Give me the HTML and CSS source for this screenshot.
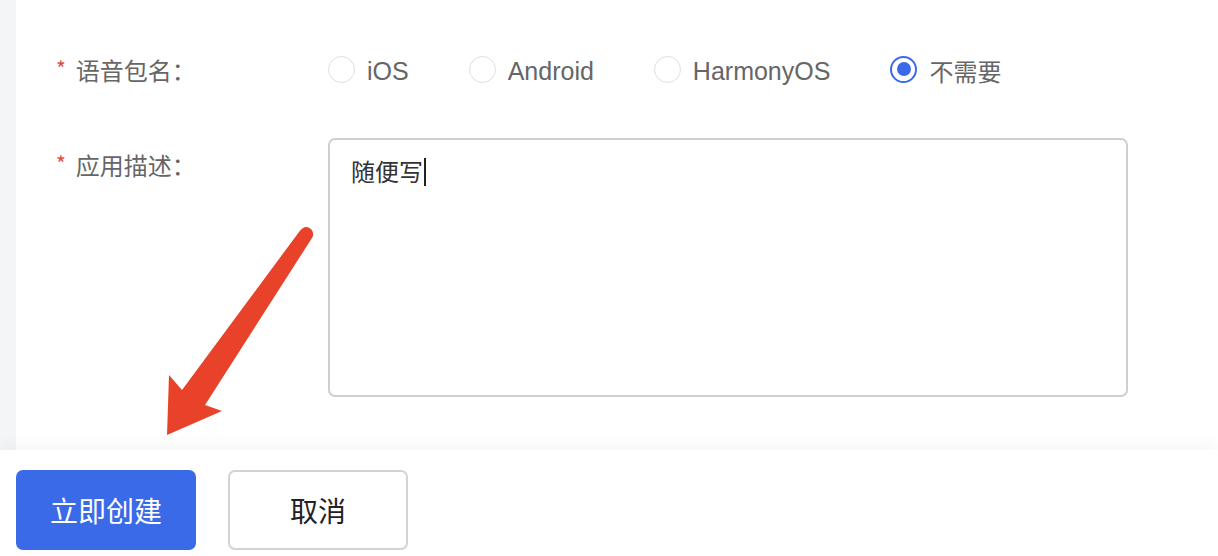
FILE: index.html
```html
<!DOCTYPE html>
<html lang="zh-CN">
<head>
<meta charset="utf-8">
<title>创建应用</title>
<link rel="stylesheet" href="styles.css">
</head>
<body>
<div class="page">
  <div class="main">
    <div class="side"></div>
    <div class="content">
      <div class="form">
        <div class="row row-radio">
          <div class="label"><span class="req">*</span>语音包名：</div>
          <div class="radios">
            <label class="radio"><span class="dot"></span><span class="rtext">iOS</span></label>
            <label class="radio"><span class="dot"></span><span class="rtext">Android</span></label>
            <label class="radio"><span class="dot"></span><span class="rtext">HarmonyOS</span></label>
            <label class="radio checked"><span class="dot"></span><span class="rtext">不需要</span></label>
          </div>
        </div>
        <div class="row row-text">
          <div class="label label-top"><span class="req">*</span>应用描述：</div>
          <div class="textarea"><span class="ta-text">随便写</span><span class="caret"></span></div>
        </div>
      </div>
    </div>
  </div>
  <div class="footer">
    <button class="btn btn-primary">立即创建</button>
    <button class="btn btn-default">取消</button>
  </div>
  <svg class="arrow" width="1218" height="556" viewBox="0 0 1218 556">
    <path d="M167 435 L169 375 L182 390 L299 232 Q305 224 311 229 Q315 233 312 238 L205 405 L222 411 Z" fill="#e8432a"/>
  </svg>
</div>
</body>
</html>
```

FILE: styles.css
```css
* { box-sizing: border-box; }
html, body { margin: 0; padding: 0; background: #fff; }
body {
  font-family: "Noto Sans CJK SC", "Noto Sans", sans-serif;
  width: 1218px;
  height: 556px;
  overflow: hidden;
}
.page { position: relative; width: 1218px; height: 556px; }
.main { display: flex; height: 450px; }
.side { width: 16px; background: #f4f5f7; }
.content { flex: 1; background: #fff; }
.form { padding-top: 46px; }
.row { display: flex; }
.row-radio { height: 48px; align-items: center; }
.row-text { margin-top: 44px; }
.label {
  width: 312px;
  padding-left: 40px;
  font-size: 24px;
  color: #666;
  line-height: 32px;
  display: flex;
  align-items: center;
}
.label-top { align-self: flex-start; padding-top: 11px; }
.req {
  color: #e5483c;
  font-size: 21px;
  margin-right: 10px;
  position: relative;
  top: -2px;
}
.radios { display: flex; align-items: center; }
.radio { display: flex; align-items: center; margin-right: 60px; }
.dot {
  width: 27px;
  height: 27px;
  border-radius: 50%;
  border: 1.5px solid #dedede;
  margin-right: 12px;
  display: flex;
  align-items: center;
  justify-content: center;
  position: relative;
  top: -1px;
}
.rtext {
  font-family: "Liberation Sans", "Noto Sans CJK SC", sans-serif;
  font-size: 25px;
  color: #666;
  line-height: 32px;
  position: relative;
  top: 1px;
}
.checked .rtext { font-family: "Noto Sans CJK SC", sans-serif; font-size: 24px; }
.checked .dot { border: 2.5px solid #3a6ae8; }
.checked .dot::after {
  content: "";
  width: 14px;
  height: 14px;
  border-radius: 50%;
  background: #3a6ae8;
}
.textarea {
  width: 800px;
  height: 259px;
  border: 2px solid #cfcfcf;
  border-radius: 7px;
  padding: 15px 21px;
  font-size: 24px;
  line-height: 32px;
  color: #333;
  display: flex;
  align-items: flex-start;
}
.caret {
  display: inline-block;
  width: 2px;
  height: 28px;
  background: #222;
  margin-top: 3px;
  margin-left: 1px;
}
.footer {
  height: 106px;
  background: #fff;
  padding: 20px 16px;
  display: flex;
  gap: 32px;
  box-shadow: 0 -6px 14px rgba(0, 0, 0, 0.035);
  position: relative;
}
.btn {
  width: 180px;
  height: 80px;
  border-radius: 7px;
  font-family: "Noto Sans CJK SC", sans-serif;
  font-size: 28px;
  cursor: pointer;
}
.btn-primary { background: #3a6ae8; color: #fff; border: none; }
.btn-default { background: #fff; color: #222; border: 2px solid #d3d3d3; }
.arrow { position: absolute; left: 0; top: 0; pointer-events: none; }
```
